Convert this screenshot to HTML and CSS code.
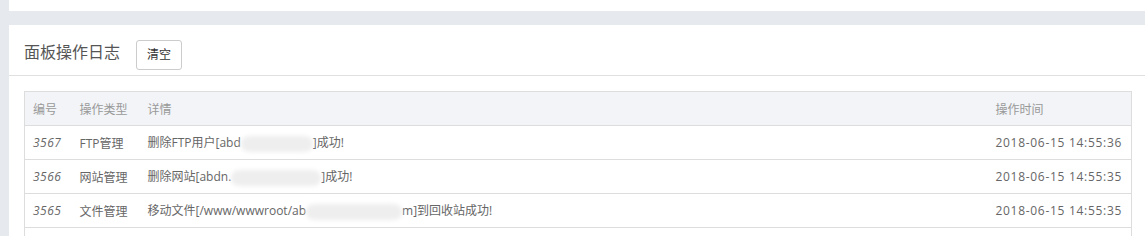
FILE: index.html
```html
<!DOCTYPE html>
<html>
<head>
<meta charset="utf-8">
<link rel="stylesheet" href="styles.css">
</head>
<body>
<div class="page">
  <div class="top-panel"></div>
  <div class="panel">
    <div class="panel-head">
      <span class="title">面板操作日志</span>
      <button class="btn">清空</button>
    </div>
    <div class="panel-body">
      <table class="log">
        <thead>
          <tr><th class="c-id">编号</th><th class="c-type">操作类型</th><th>详情</th><th class="c-time">操作时间</th></tr>
        </thead>
        <tbody>
          <tr><td class="num"><i>3567</i></td><td>FTP管理</td><td>删除FTP用户[abd<span class="smudge w1"></span>]成功!</td><td class="time">2018-06-15 14:55:36</td></tr>
          <tr><td class="num"><i>3566</i></td><td>网站管理</td><td>删除网站[abdn.<span class="smudge w2"></span>]成功!</td><td class="time">2018-06-15 14:55:35</td></tr>
          <tr><td class="num"><i>3565</i></td><td>文件管理</td><td>移动文件[/www/wwwroot/ab<span class="smudge w3"></span>m]到回收站成功!</td><td class="time">2018-06-15 14:55:35</td></tr>
          <tr><td></td><td></td><td></td><td></td></tr>
        </tbody>
      </table>
    </div>
  </div>
</div>
</body>
</html>
```

FILE: styles.css
```css
* { box-sizing: border-box; }
html, body { margin: 0; padding: 0; background: #e6e9ed; overflow: hidden; }
body { font-family: "Open Sans", "Noto Sans CJK SC", sans-serif; color: #666; font-size: 12px; }
.page { padding-left: 9px; height: 236px; overflow: hidden; }
.top-panel { height: 11px; background: #fff; }
.panel { margin-top: 14px; background: #fff; height: 211px; overflow: hidden; }
.panel-head { height: 51px; border-bottom: 1px solid #e0e0e0; display: flex; align-items: flex-start; padding: 15px 0 0 15px; }
.title { font-size: 16px; color: #555; line-height: 20px; margin-top: 2px; }
.btn { margin-left: 16px; height: 30px; width: 46px; border: 1px solid #ccc; border-radius: 3px; background: #fff; font-family: inherit; font-size: 12px; color: #333; padding: 0; line-height: 28px; }
.panel-body { padding: 15px 13px 0 15px; }
.log { width: 100%; border-collapse: collapse; border: 1px solid #ddd; table-layout: fixed; }
.log th { background: #f2f4f7; font-weight: normal; color: #999; text-align: left; height: 34px; padding: 0 0 0 8px; border-bottom: 1px solid #ddd; }
.log td { height: 34px; padding: 0 0 0 8px; border-bottom: 1px solid #ddd; color: #666; white-space: nowrap; }
.log th.c-id { width: 47px; }
.log th.c-type { width: 68px; }
.log th.c-time { width: 144px; }
.log td.num { letter-spacing: 0.5px; }
.log td.time { letter-spacing: 0.7px; }
.log td i { color: #666; }
.smudge { display: inline-block; height: 16px; vertical-align: middle; background: #eeeeee; border-radius: 8px; filter: blur(2px); }
.w1 { width: 72px; }
.w2 { width: 90px; }
.w3 { width: 96px; }
```
